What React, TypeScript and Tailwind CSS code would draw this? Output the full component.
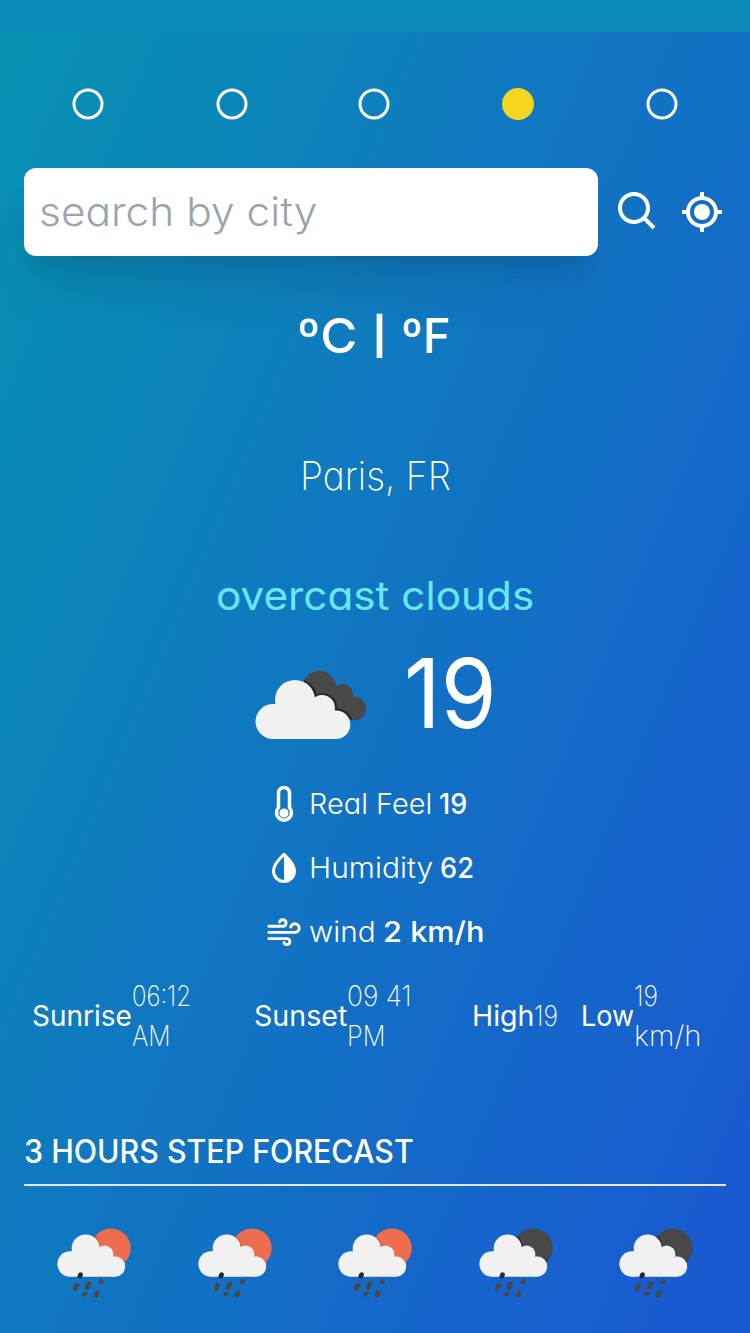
import React from "react";
import { BiSearch, BiCurrentLocation } from "react-icons/bi";

const INTER = "font-['Inter','Liberation_Sans',sans-serif] [font-feature-settings:'cv11']";

function Fit({ w, children, className = "" }: { w: number; children: string; className?: string }) {
  const ref = React.useRef<HTMLSpanElement>(null);
  const [scale, setScale] = React.useState(1);
  React.useLayoutEffect(() => {
    const el = ref.current;
    if (el) setScale(w / el.offsetWidth);
  }, [w, children]);
  return (
    <span className={`inline-block whitespace-pre ${className}`} style={{ width: `${w}px` }}>
      <span ref={ref} className="inline-block origin-left" style={{ transform: `scaleX(${scale})` }}>
        {children}
      </span>
    </span>
  );
}

function CloudIcon() {
  return (
    <svg className="h-[72px] w-[114px] shrink-0" viewBox="0 0 114 72">
      <defs>
        <clipPath id="backCloud">
          <circle cx="65.300" cy="19" r="17" />
          <circle cx="88" cy="26" r="11" />
          <circle cx="100.500" cy="39.500" r="11.700" />
          <path d="M60 20h35v31h6H60z" />
        </clipPath>
      </defs>
      <g clipPath="url(#backCloud)">
        <path d="M40 0h74v72H40z" fill="#484849" />
        <g fill="#222326">
          <circle cx="41.500" cy="30.500" r="21.500" />
          <circle cx="69" cy="38.500" r="14" />
          <circle cx="83" cy="55.500" r="15.800" />
        </g>
      </g>
      <g fill="#f1f1f0">
        <circle cx="41" cy="31" r="20" />
        <circle cx="68" cy="39" r="13" />
        <circle cx="19" cy="52.500" r="17.500" />
        <circle cx="82" cy="55.700" r="14.300" />
        <path d="M19 35h49v35H19zM50 42h31v28H50z" />
      </g>
    </svg>
  );
}

function RainIcon({ night = false }: { night?: boolean }) {
  return (
    <svg className="h-[72px] w-[76px]" viewBox="0 0 76 72">
      <circle cx="55" cy="20.300" r="19.700" fill={night ? "#484849" : "#ec6e4c"} />
      <path d="M39.500 8c4 4 4.500 7 4.500 10 8-1 13 4 14 10 5 0 9 2 11.500 6l-9 4-25-20z" fill={night ? "#29292c" : "#e95234"} />
      <g fill="#f1f1f1">
        <circle cx="29.700" cy="20.500" r="14" />
        <circle cx="48.500" cy="26.500" r="9" />
        <circle cx="14" cy="36" r="12.700" />
        <circle cx="59" cy="38.500" r="10.200" />
        <path d="M14 23.500h34.500V48H14zM36 29h23v19.700H14V40h22z" />
      </g>
      <g stroke="#484849" strokeWidth="4.800" strokeLinecap="round">
        <path d="M24.500 46.700l-.6 1.400" stroke="#29292c" />
        <path d="M20.700 57.300l-1.400 3.300M32.700 56l-1.400 3.300M45.400 53.300l-.3.600M28.900 65.700l-.2.300M41 64.800l-1 2.400" />
      </g>
    </svg>
  );
}

function Ring() {
  return (
    <svg className="size-8" viewBox="0 0 32 32" fill="none">
      <circle cx="16" cy="16" r="14" stroke="white" strokeWidth="3" />
    </svg>
  );
}

function ThermometerIcon() {
  return (
    <svg className="h-9 w-5" viewBox="0 0 20 36" fill="none">
      <path d="M4.500 21V7a5.500 5.500 0 0 1 11 0V21.600a7.500 7.500 0 1 1-11 0Z" stroke="white" strokeWidth="3.500" />
      <circle cx="10" cy="27" r="4.600" fill="white" />
    </svg>
  );
}

function DropIcon() {
  return (
    <svg className="h-8 w-6" viewBox="0 0 24 32">
      <path d="M12 2.300C8.500 5.500 1.500 12 1.500 19a10.500 10.500 0 0 0 21 0C22.500 12 15.500 5.500 12 2.300Z" fill="none" stroke="white" strokeWidth="3" strokeLinejoin="round" />
      <path d="M12 3v26.500A10.500 10.500 0 0 0 22.500 19C22.500 12 15.500 6 12 3Z" fill="white" />
    </svg>
  );
}

function WindIcon() {
  return (
    <svg className="h-7 w-[34px] shrink-0" viewBox="0 0 34 28" fill="none" stroke="white" strokeWidth="2.900" strokeLinecap="round">
      <path d="M1.900 8.300h13.800a3.300 3.300 0 1 0-3.100-4.300M1.900 14.400h26a4.300 4.300 0 1 0-4.200-5.300M1.900 20.600h18a3 3 0 1 1-2.900 4" />
    </svg>
  );
}

export default function App() {
  return (
    <div className={`h-[1333px] w-[750px] overflow-hidden bg-[#0b8bb7] pt-8 text-white ${INTER}`}>
      <div className="flex h-[1780px] flex-col bg-[linear-gradient(to_bottom_right,#0891b2,#1d4ed8)] px-6">
        <nav className="flex h-[136px] items-center gap-28 pt-2 pl-12">
          <Ring />
          <Ring />
          <div className="-ml-0.5"><Ring /></div>
          <span className="size-8 rounded-full bg-[#f7d61f]" />
          <Ring />
        </nav>

        <div className="flex h-[88px] items-center">
          <div className="flex h-[88px] w-[574px] items-center rounded-xl bg-white pl-[15px] text-[40px] font-light text-[#9ca3af] shadow-[0_40px_50px_-10px_rgba(0,0,0,0.1),0_16px_20px_-12px_rgba(0,0,0,0.1)]">
            <Fit w={278}>search by city</Fit>
          </div>
          <BiSearch className="ml-4 size-12" />
          <BiCurrentLocation className="ml-4 size-12" />
        </div>

        <div className="mt-12 flex h-[64px] items-center justify-center pr-[3px] text-[48px] font-medium">
          <Fit w={60}>ºC</Fit>
          <Fit w={15} className="ml-[15px] pb-px text-[37px] leading-[44px] font-bold">|</Fit>
          <Fit w={49} className="ml-[14px]">ºF</Fit>
        </div>
        <div className="mt-[80px] flex h-[56px] items-center justify-center text-[40px] font-extralight">
          <Fit w={151}>Paris, FR</Fit>
        </div>
        <div className="mt-16 flex h-[56px] items-center justify-center text-[40px] text-[#67e8f9]">
          <Fit w={318}>overcast clouds</Fit>
        </div>

        <div className="mt-4 flex h-[120px] items-center pl-[230px]">
          <div className="pt-2.5">
            <CloudIcon />
          </div>
          <div className="ml-[36px] pb-[15px] text-[96px] leading-[96px]">
            <Fit w={93}>19</Fit>
          </div>
        </div>

        <div className="mt-6 flex flex-col gap-6 pl-[242px] text-[28px] font-light leading-10">
          <div className="flex items-center">
            <div className="mr-[7px] flex w-9 justify-center"><ThermometerIcon /></div>
            <Fit w={123}>Real Feel</Fit>
            <Fit w={28} className="ml-[7px] font-medium">19</Fit>
          </div>
          <div className="flex items-center">
            <div className="mr-[7px] flex w-9 justify-center"><DropIcon /></div>
            <Fit w={124}>Humidity</Fit>
            <Fit w={34} className="ml-[7px] font-medium">62</Fit>
          </div>
          <div className="flex items-center">
            <div className="mr-[7px] flex w-9 justify-center"><WindIcon /></div>
            <Fit w={67}>wind</Fit>
            <Fit w={101} className="ml-[7px] font-medium">2 km/h</Fit>
          </div>
        </div>

        <div className="mt-6 flex h-20 items-center pl-2 text-[28px] leading-10">
          <div className="flex w-[222px] items-center">
            <Fit w={100}>Sunrise</Fit>
            <div className="flex flex-col items-start font-extralight">
              <Fit w={59}>06:12</Fit>
              <Fit w={39}>AM</Fit>
            </div>
          </div>
          <div className="flex w-[218px] items-center">
            <Fit w={93}>Sunset</Fit>
            <div className="flex flex-col items-start font-extralight">
              <Fit w={65}>09 41</Fit>
              <Fit w={38}>PM</Fit>
            </div>
          </div>
          <div className="flex w-[109px] items-center">
            <Fit w={62}>High</Fit>
            <Fit w={24} className="font-extralight">19</Fit>
          </div>
          <div className="flex items-center">
            <Fit w={53}>Low</Fit>
            <div className="flex flex-col items-start font-extralight">
              <Fit w={24}>19</Fit>
              <Fit w={67}>km/h</Fit>
            </div>
          </div>
        </div>

        <h2 className="mt-[72px] flex h-12 items-center text-[32px] font-medium">
          <Fit w={390}>3 HOURS STEP FORECAST</Fit>
        </h2>
        <hr className="mt-2 border-t-2 border-[#e5e7eb]" />

        <div className="mt-[42px] flex gap-[64.500px] pl-8">
          <RainIcon />
          <RainIcon />
          <RainIcon />
          <RainIcon night />
          <RainIcon night />
        </div>
      </div>
    </div>
  );
}
